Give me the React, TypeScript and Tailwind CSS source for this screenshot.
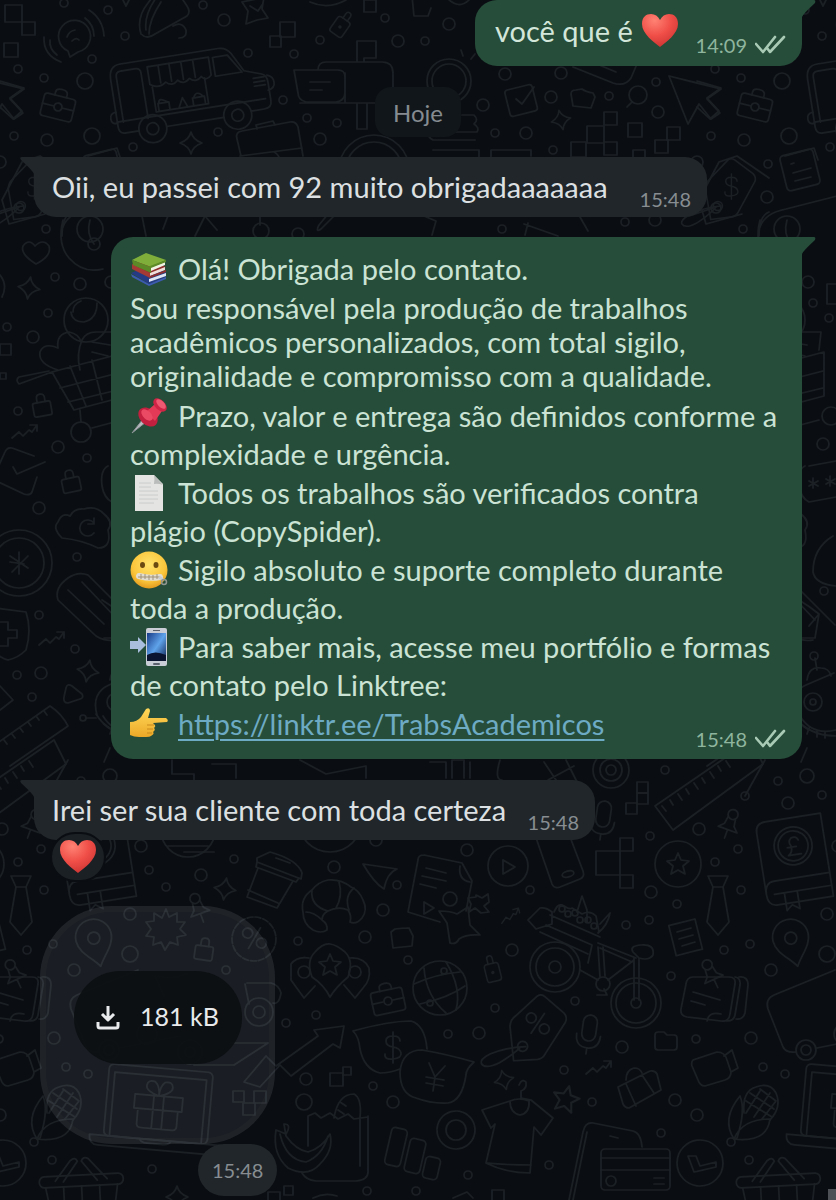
import type { ReactNode } from "react";

type Spot = { x: number; y: number; r?: number; s?: number };

const at = ({ x, y, r = 0, s = 1 }: Spot) =>
  `translate(${x} ${y}) rotate(${r}) scale(${s})`;

// [x, y, radius] of the small rings scattered over the wallpaper
const rings: number[][] = [
  [64, 3, 4], [108, 10, 4], [125, 36, 4], [224, 20, 6], [92, 59, 4], [18, 69, 4], [44, 78, 4], [85, 81, 8],
  [248, 53, 4], [294, 54, 4], [320, 40, 4], [398, 41, 6], [385, 18, 4], [203, 5, 4], [283, 100, 4],
  [307, 118, 4], [337, 123, 4], [320, 139, 6], [218, 132, 4], [133, 147, 4], [92, 136, 8], [47, 140, 6],
  [14, 136, 4], [46, 229, 4], [0, 162, 6], [449, 24, 6], [425, 41, 4], [505, 74, 6], [561, 73, 6],
  [551, 97, 6], [483, 105, 6], [495, 133, 4], [526, 133, 6], [553, 150, 4], [609, 96, 4], [656, 82, 4],
  [658, 112, 6], [71, 164, 4], [70, 197, 6], [625, 222, 4], [655, 220, 6], [502, 229, 4], [55, 277, 4],
  [80, 284, 6], [48, 313, 4], [7, 327, 4], [33, 337, 6], [18, 411, 4], [58, 447, 6], [87, 458, 4],
  [39, 508, 6], [77, 557, 4], [39, 615, 4], [75, 649, 4], [41, 673, 6], [17, 675, 4], [32, 697, 4],
  [111, 282, 6], [116, 303, 4], [132, 318, 4], [126, 444, 6], [127, 591, 4], [665, 770, 4], [48, 796, 4],
  [81, 781, 4], [91, 803, 6], [125, 795, 4], [2, 829, 6], [650, 836, 4], [41, 849, 4], [18, 862, 4],
  [44, 890, 4], [651, 892, 6], [677, 904, 4], [141, 846, 6], [149, 870, 4], [166, 887, 4], [201, 875, 6],
  [234, 859, 4], [130, 914, 6], [53, 944, 4], [27, 950, 4], [74, 970, 6], [130, 954, 8], [226, 970, 4],
  [286, 1023, 4], [298, 941, 4], [54, 1038, 6], [66, 1067, 4], [88, 1074, 4], [52, 1160, 4],
  [152, 1169, 4], [306, 1079, 6], [304, 1102, 8], [334, 867, 6], [376, 840, 6], [467, 850, 6],
  [397, 885, 4], [383, 910, 6], [365, 937, 6], [408, 960, 4], [530, 890, 4], [512, 950, 6],
  [495, 1008, 4], [479, 1033, 6], [448, 1034, 4], [373, 1086, 4], [393, 1102, 6], [316, 1015, 4],
  [564, 1070, 4], [549, 1165, 4], [468, 1175, 4], [416, 1191, 4], [367, 1191, 4], [649, 920, 4],
  [626, 925, 4], [671, 976, 4], [575, 1001, 4], [622, 1047, 6], [696, 1039, 4], [675, 1100, 6],
  [0, 1115, 6], [661, 1133, 4], [592, 1102, 4],
];

// [x, y, size] of the pixel squares
const squares: number[][] = [
  [5, 5, 17], [22, 22, 13], [4, 43, 14], [280, 22, 15], [270, 36, 11], [604, 112, 13], [587, 126, 17],
  [571, 142, 15], [604, 142, 13], [628, 123, 14], [667, 127, 13], [655, 140, 13], [633, 150, 12],
  [637, 782, 11], [637, 793, 11], [626, 803, 11], [596, 851, 24], [620, 838, 13], [620, 875, 13],
  [233, 1091, 11], [243, 1103, 12], [254, 1091, 12], [330, 1073, 13], [343, 1067, 8], [492, 1190, 12],
  [0, 344, 11], [0, 373, 6], [130, 284, 20], [364, 0, 12], [268, 1192, 12], [284, 1186, 9],
];

const Sparkle = (p: Spot) => (
  <path transform={at(p)} d="M0-11Q2-3 11 0Q2 3 0 11Q-2 3-11 0Q-2-3 0-11Z" />
);

const Briefcase = (p: Spot) => (
  <g transform={at(p)}>
    <rect x="-16" y="-11" width="32" height="23" rx="3" />
    <path d="M-6-11v-3q0-4 6-4t6 4v3M-16 0H-5M5 0h11" />
    <circle r="4" />
  </g>
);

const Padlock = (p: Spot) => (
  <g transform={at(p)}>
    <rect x="-9" y="-5" width="18" height="14" rx="2" />
    <path d="M-4-5v-4q0-4 4-4t4 4v4" />
  </g>
);

const Trend = (p: Spot) => (
  <path transform={at(p)} d="M-12 5l7-6 4 4 6-6 3 2 5-7M6-8h7v6" />
);

const MapPin = (p: Spot) => (
  <g transform={at(p)}>
    <path d="M0 24C-6 14-18 6-18-6a18 18 0 0 1 36 0C18 6 6 14 0 24Z" />
    <circle cy="-5" r="6" />
  </g>
);

const Star = (p: Spot) => (
  <path transform={at(p)} d="M0-11l3 7 8 1-6 5 2 8-7-4-7 4 2-8-6-5 8-1Z" />
);

const Microphone = (p: Spot) => (
  <g transform={at(p)}>
    <rect x="-7" y="-17" width="14" height="26" rx="7" />
    <path d="M-12 3q0 13 12 13T12 3M0 16v6" />
  </g>
);

const Bottle = (p: Spot) => (
  <g transform={at(p)}>
    <rect x="-8" y="-6" width="16" height="20" rx="3" />
    <path d="M-3-6v-6q0-3 3-3t3 3v6" />
    <circle cy="4" r="1" />
  </g>
);

const PushPin = (p: Spot) => (
  <g transform={at(p)}>
    <circle cy="-9" r="5" />
    <path d="M-4-5l-1 7-5 5h20l-5-5-1-7M0 7v9" />
  </g>
);

const Tie = (p: Spot) => (
  <path transform={at(p)} d="M-10-28h20l-5 11H-5ZM-5-17l-6 35L0 31l11-13L5-17" />
);

const Folder = (p: Spot) => (
  <path transform={at(p)} d="M-11-6q0-3 3-3h6l3 3h7q3 0 3 3v9q0 3-3 3H-8q-3 0-3-3Z" />
);

const Dollar = (p: Spot) => (
  <path transform={at(p)} d="M7-6q0-5-7-5t-7 5 7 6 8 6-8 6-8-5M0-15v31" />
);

const Percent = (p: Spot) => (
  <g transform={at(p)}>
    <path d="M5-11L-4 11" />
    <circle cx="-7" cy="-4" r="5" />
    <circle cx="8" cy="4" r="5" />
  </g>
);

const PriceTag = ({ children, ...p }: Spot & { children: ReactNode }) => (
  <g transform={at(p)}>
    <path d="M-18-10 2-31q4-3 8 0l20 15q4 4 2 9L14 26q-2 5-7 6l-24 3-6-34q0-7 5-11Z" />
    <circle cx="-9" cy="20" r="5" />
    <path d="M-6 20q-20 2-35 10-10 6-8 10 4 6 18-2 12-8 20-17" />
    {children}
  </g>
);

const Corn = (p: Spot) => (
  <g transform={at(p)}>
    <path d="M-18 22q-13-20 6-43 6 14-3 42ZM-18 22q8-20 36-20-3 24-36 20Z" />
    <path d="M-8-4q-2-22 12-26 14-5 20 6 6 14-6 27M-6-16l26 16M-2-24l24 16M8-28l16 12M-6-4 8-26M2 0 18-24M10 2 24-16" />
    <circle cx="-21" cy="25" r="4" />
  </g>
);

const Basket = (p: Spot) => (
  <g transform={at(p)}>
    <rect x="-42" y="0" width="84" height="11" rx="5" />
    <path d="M-36 11l4 24M36 11l-4 24M-18 11v24M0 11v24M18 11v24M-26 5l16-20q5-4 7 1L-18 6M26 5 8-16q-5-3-7 2L16 6" />
  </g>
);

const Laptop = (p: Spot) => (
  <g transform={at(p)}>
    <rect x="-52" y="-40" width="104" height="72" rx="5" />
    <path d="M-46 32v-64h92v64M-66 32H66q0 10-9 10H-57q-9 0-9-10ZM-16 32q2 4 8 4H8q6 0 8-4" />
    <path d="M-24-12h48v14h-48ZM-20 2v15q0 4 4 4h32q4 0 4-4V2M-5-12v33M5-12v33M0-12q-14-4-13-10t8-4q5 4 5 14 0-10 5-14 7-2 8 4T0-12" />
  </g>
);

const NoteStack = (p: Spot) => (
  <g transform={at(p)}>
    <path d="M-20-20h36q7 0 6 7l-5 30q-1 8-9 7l-34-4q-7-1-6-8l5-25q1-7 7-7ZM-6 24q2-10 14-7" />
    <path d="M22-20q6 1 5 8l-5 30q-1 6-8 6M26-20q9-1 9 8l-3 28q-2 7-9 6M-20-5l27 8M-22 4l14 4" />
  </g>
);

const Truck = (p: Spot) => (
  <g transform={at(p)}>
    <path d="M-54 47h-13q-7 0-7-7v-48q0-14 12-14H37q8 0 12 7l10 19 17 6q5 2 5 9v19q0 7-8 7H60M-26 47h58" />
    <path d="M-68 36v-46q0-5 5-5h14q6 0 6 5v46M-74 35h150M-36-15h62v18q-6 6-10 0-6 6-12 0-6 6-12 0-6 6-12 0-8 6-16 0ZM-34 6v25h53V5M-25-15V3M-14-15V3M-2-15V3M10-15V3M30-14h15l12 19H30ZM-31 31v-8h11v8M-30 23q0-7 9 0M4 31v-8h12v8M5 23q4-8 10 0M-11 31l5-10 4 10M67 13h11M67 17h11M67 21h11M81 12q6 2 6 8t-7 7" />
    <path d="M-74 25q-6 0-6 6t6 5" />
    <circle cx="-40" cy="47" r="14" /><circle cx="-40" cy="47" r="6" />
    <circle cx="46" cy="47" r="14" /><circle cx="46" cy="47" r="6" />
  </g>
);

const Book = (p: Spot) => (
  <g transform={at(p)}>
    <path d="M34-40h-56q-10 0-10 10v62q0 12 10 12h56ZM-32 32q0-12 10-12h56M-24 33h58M-14 33v18l6-5 7 5V33" />
    <circle cx="2" cy="-12" r="19" /><circle cx="2" cy="-12" r="15" />
    <path d="M8-17q-2-5-7-3-4 3-1 8 1 6-4 9H9M-4-11h9" />
  </g>
);

const Doodles = () => (
  <>
    {rings.map(([x, y, r]) => (
      <circle key={`${x}-${y}`} cx={x} cy={y} r={r} />
    ))}
    {squares.map(([x, y, w]) => (
      <rect key={`${x}-${y}`} x={x} y={y} width={w} height={w} />
    ))}

    {/* top */}
    <path d="M70 57l-2-6a16 16 0 1 1 10 1Z" />
    <path d="M67 37q2-6 8-7M72 41q4-4 7-1M85 18q9 7 9 18M89 10q14 9 15 26M50 40q-1 9 7 15M44 37q-1 18 17 25" />
    <path d="M141 34q-5-16 7-31l6-8M141 34q6 6 14 0l32-18q4-4 0-10l-8-12M146 30q-2-15 10-32M149 34q0-14 12-32M173 26q9-5 13 4 1 8-7 8" />
    <path d="M123 0l3 6 3-6M242 2l24-5M242 2l6 9-2 13 11-4 11-2-6-9 2-12M250 6l8 5 4-6" />
    <path d="M310 2q18 8 36-2M412-4l2 20 14 0 3-8M447-2q12 12 22 2" />
    <Truck x={185} y={76} r={-9} />
    <Bottle x={342} y={24} r={35} s={0.9} />
    <Briefcase x={58} y={107} r={14} />
    <path d="M0 81l24 7-14 10 12 13-9 8-13-12" />
    <path d="M294 70h44q7 0 7 7v15q0 9-9 10h-30q-8-2-8-9ZM318 70q0-8 8-8h56q11 0 11 11v30h-93M345 73v30M357 62V41h19v17h-12v4M357 103v26h10v-26M310 82h20M310 90h12" />
    <path d="M237 139q-2-7 5-8l48-9q6-1 8 5l5 29M237 139l4 17M257 129l-1-4 17-4 2 4M240 156l62-8M274 152q4 2 6 7" />
    <Sparkle x={191} y={143} />
    <circle cx="374" cy="170" r="35" /><circle cx="374" cy="170" r="28" />
    <path d="M339 211l-18 18q-6 4-2-4l14-17" />
    <path d="M88 156l29-8 4 12" />
    <path d="M2 200l20-38 18-6 32 22M2 200l7 24 36-10M-8 216l24-8" /><circle cx="19" cy="208" r="5" />
    <circle cx="449" cy="81" r="22" />
    <circle cx="449" cy="81" r="17" />
    <path d="M461 50l2 6M475 54l-4 5" />
    <path d="M462 115h12q5 5 0 9 6 4 3 8h-48q-2 5 4 8h42M433 150h46v8M491 158v-8h40v6" />
    <rect x="507" y="87" width="28" height="27" rx="3" transform="rotate(-14 521 100)" />
    <path d="M516 99l6 5 12-17" />
    <path d="M571 94q0-4 5-4l6-1q4 3 11 4l2 4-4 11-18-2Z" />
    <circle cx="638" cy="95" r="9" /><path d="M632 102l-5 5" />
    <path d="M573 67l40 16q12 4 18-5l6-14M592 62l24 10" />
    <path d="M669 76l52 13-14 10 13 14-9 6-12-15-11 20Z" />
    <Sparkle x={561} y={120} r={-12} s={0.9} />
    <rect x="86" y="152" width="34" height="36" rx="4" transform="rotate(-14 103 170)" />
    <path d="M94 164l3-1M96 173l18-5M98 181l16-4" />
    <PriceTag x={29} y={188} s={0.9}>
      <Dollar x={6} y={-2} s={0.9} />
    </PriceTag>
    <path d="M63 227q5-14 26-18l55-14M158 215q4-10 12-6M163 229l6-16" />
    <circle cx="90" cy="229" r="13" />
    <path d="M62 236q0-20 10-24M142 216l4 20M432 235l4-14-12-5M524 224l34 12M525 235l3-12M580 217l8 14" />
    <path d="M195 236l10-20 12 14M260 215v10" /><circle cx="261" cy="231" r="8" /><circle cx="298" cy="234" r="6" />

    {/* left edge, repeated on the right */}
    <path d="M63 220q-6 24 6 38 14 16 34 11M90 220q-4 14 4 24" /><circle cx="94" cy="244" r="6" />
    <path d="M36 264q-16-10-13-18 6-8 12 0 8-8 14 0 3 10-13 18Z" />
    <Sparkle x={29} y={288} r={8} />
    <path d="M0 275q8 10 2 22" />
    <circle cx="86" cy="320" r="22" />
    <path d="M73 312q0-8 8-11M97 303q0 16-13 19-12 0-13-10" />
    <path d="M58 370q-20-6-18-18 4-10 18-4-2-14 11-16 10 2 12 10M80 370q-4-16 2-30 4-8 14-8h28l-2 18M92 342l18 3M92 352l16 4M52 372l22 38M52 372l-33 12q-4-4 0-7l30-6M52 372l75-20v44l-53 14M60 388l66-17M68 402l58-14M70 366l16 40M92 360l10 40M80 410l1 12M92 428l30-8" />
    <circle cx="81" cy="432" r="10" /><circle cx="134" cy="416" r="9" />
    <Padlock x={42} y={407} r={-10} />
    <Trend x={24} y={433} />
    <path d="M34 456l-22-8q-5-1-7 4L-6 476M-6 480l30 14q6 2 8-2l5-15M13 467l4 7 28-12" />
    <Padlock x={71} y={483} r={-12} />
    <path d="M108 466q-8 4-6 20 2 12 10 16l27-5M112 466l27-5M116 478v10M112 481l9 5M121 481l-9 5M133 476v10M129 479l9 5M138 479l-9 5" />
    <path d="M62 538q-10-10-4-16 4-10 12-6 4-8 14-7 12-4 20 5 10 8 4 16 4 18-10 18-16-8-36-10Z" />
    <path d="M94 523a8 8 0 1 0 0 10M94 518v6h-6" />
    <circle cx="19" cy="563" r="33" /><circle cx="19" cy="563" r="25" />
    <path d="M19 552v22M10 556l18 12M12 572l16-16M10 562l14 2" />
    <path d="M58 600q-4-12 10-22 10-7 20-3l50 50M58 600l38 36q10 6 20 4M68 590l36 34M82 582l36 38M136 536q-20 12-20 36 2 12 23 14" />
    <path d="M-4 608l30 4q6 18 0 38-8 8-18 10-8-2-16-10M0 622h8v8h9v8H8v8H0" />
    <path d="M102 600q10 6 20 14l-4 24h-14M112 626l10-12" />
    <Trend x={51} y={640} />
    <Sparkle x={88} y={671} r={10} />
    <path d="M66 688q1-5 6-2l10 8q2 4-2 5l-12 4q-5 0-4-6ZM0 686l13 14-13 10M-4 744l54-38q12 8 18 20l-58 40M4 740l3 4M12 734l3 4M20 728l3 4M28 722l3 4M36 716l3 4M44 711l3 4" />
    <path d="M97 715q-6-22 12-30l28-12M86 718h10M96 714q6 10 16 16" />
    <circle cx="83" cy="718" r="3" /><circle cx="116" cy="702" r="9" /><circle cx="116" cy="702" r="3" />
    <path d="M103 716q12 20 36 14M104 724q14 12 36 12M112 728l-2 6M120 731v6M128 732v6M118 658l2 12M110 680q2-14 14-12 8 0 10 8M104 762l6-14" />
    <circle cx="117" cy="656" r="4" /><circle cx="110" cy="776" r="7" />

    {/* band between the big message and the last one */}
    <path d="M68 760l-20 36M172 760v14h22v6M212 764h24v14M300 760l26 14 40-8v12M430 762h16v16M452 778v-18h12v18M470 778v-16M500 760q-6 20 2 20M544 762l16 24M566 760l14 28M548 780l26-14" />
    <circle cx="611" cy="770" r="18" /><circle cx="611" cy="770" r="11" /><circle cx="611" cy="770" r="5" />
    <path d="M655 806l96-66 12 24-90 66ZM662 806l4 5M670 800l3 5M678 794l4 6M686 789l3 5M694 783l4 6M702 778l3 5M710 772l4 6M718 766l3 5M726 761l4 6" />
    <Microphone x={603} y={818} r={8} />
    <PushPin x={33} y={823} r={20} />
    <Book x={96} y={858} r={-9} />
    <circle cx="678" cy="864" r="23" /><Star x={678} y={864} />
    <Tie x={21} y={904} />
    <circle cx="508" cy="866" r="20" /><path d="M503 860v14l12-7Z" />
    <path d="M534 832l18 52q2 5 8 3l20-8q5-2 3-8l-16-42" />
    <ellipse cx="568" cy="874" rx="6" ry="3" transform="rotate(-15 568 874)" />
    <circle cx="188" cy="830" r="27" /><circle cx="330" cy="820" r="32" />
    <path d="M168 846h40M184 852h30" />

    {/* lower half */}
    <path d="M257 858l13-6q28 8 32 21l-1 6-44-17ZM257 862l-1 5 40 15 3-4M258 868l-11 29 30 11 16-27M248 890l30 13M276 858l14 5" />
    <path d="M313 930q8 4 14 0 1-6-5-10 0-6 6-9 10-5 20-1 4 6 2 12 6 3 12-4 6-8 1-18-4-10-12-13-10-8-23-7-10 2-16 10-12 8-9 22 0 12 10 18ZM312 890q-2 16 16 21M339 882q4 14-3 26M354 888q-10 8-5 22M306 912q8 0 16 8" />
    <path d="M363 864l34 5q-10 4-13 20-10-6-21-25Z" />
    <Sparkle x={225} y={889} r={8} />
    <path d="M424 855l38 8 10 18-6 30M424 855q-6 0-6 5l-10 52 32 10M426 868l20 5M422 876l24 5M420 884l16 4M460 866q-2 14 10 16M424 902v12l10-6Z" />
    <circle cx="450" cy="899" r="7" />
    <path d="M468 907l2 18 10 10q-14-1-21 4-3 6-9 4l-3-20-8-12q12 0 18 3Z" />
    <path d="M476 895l6 3 6-4 1 8-5 4 5 6-8 1-6-5-6 4 2-8-3-6 8-1Z" />
    <Trend x={510} y={917} r={-15} s={0.8} />
    <path d="M391 932l4-3q8-1 14-1l4 8-1 10-19 2Z" />
    <path d="M330 997q-6-12-18-20-6-16 3-25 8-9 15-8t15 8q9 9 3 25-12 10-18 20ZM309 958q-12-2-18 6v16l13 18 11-12M350 958q14-1 19 10 2 12-6 20l-8 10-11-13" />
    <Star x={330} y={965} /><circle cx="304" cy="972" r="6" /><circle cx="355" cy="972" r="6" />
    <circle cx="440" cy="988" r="27" />
    <path d="M414 984q22-10 46-12M420 1004q28-6 45-18M424 968q2 28 22 45M446 962q16 26 10 48" />
    <circle cx="444" cy="971" r="3" /><circle cx="430" cy="1003" r="3" />
    <Bottle x={492} y={969} r={-14} s={0.9} />
    <Briefcase x={388} y={1001} r={-12} />
    <path d="M528 920l12-12q6-1 12 4v12l-16 5ZM550 915l50 22M546 925l46 20-4 18M540 932l48 22M554 912q4-10 10-6t8 2l10 6q8-4 14 2l3 16M577 912l5-16 5 14v12M600 924l10-11q-2 12-12 20" />
    <circle cx="562" cy="909" r="3" /><circle cx="568" cy="914" r="3" /><circle cx="575" cy="913" r="3" />
    <circle cx="580" cy="920" r="3" /><circle cx="588" cy="920" r="3" /><circle cx="594" cy="926" r="3" />
    <circle cx="555" cy="967" r="25" /><circle cx="555" cy="967" r="19" /><circle cx="555" cy="967" r="6" />
    <circle cx="636" cy="1003" r="25" /><circle cx="636" cy="1003" r="20" /><circle cx="636" cy="1003" r="5" />
    <path d="M598 943l38 15M600 948l32 14M634 1000v-42M639 1000v-42M634 960l-26 20M598 947l2 30M603 947l2 29M580 970l18 10M633 952q-4-6 8-7 14-1 12 10-4 6-14 3l-6-6ZM597 995h10l-3-6" />
    <circle cx="603" cy="984" r="7" />
    <Microphone x={589} y={1032} r={8} />
    <rect x="672" y="922" width="27" height="31" transform="rotate(-14 685 937)" />
    <path d="M677 932l14-4M679 939l14-4M682 946l13-4" />
    <NoteStack x={16} y={997} />
    <PushPin x={14} y={973} r={-25} />
    <MapPin x={95} y={943} r={-14} />
    <path d="M166 909l3 8 8-4v9h8l-5 7 6 6-9 2 1 8-8-3-5 8-4-8-8 3 1-8-8-1 5-7-5-7 8-1v-8l8 5Z" />
    <Padlock x={204} y={951} r={8} />
    <PushPin x={198} y={907} r={-20} />
    <circle cx="254" cy="939" r="22" strokeDasharray="6 2" />
    <Percent x={254} y={938} r={8} />
    <path d="M247 983h24q8 2 10 10-2 12-8 10M245 984l4 20" /><circle cx="259" cy="1012" r="14" /><circle cx="259" cy="1012" r="6" />
    <path d="M138 970l-61 25q-9 4-6 14l15 38q3 6 13 5M155 976l9 20M158 976q14 4 28-2M120 1048l60-12" />
    <circle cx="109" cy="1050" r="10" /><circle cx="109" cy="1050" r="5" />
    <circle cx="190" cy="1052" r="12" /><circle cx="190" cy="1052" r="5" /><circle cx="147" cy="1034" r="10" />
    <path d="M230 1043h38l-34 22h-40M268 1043l-34 22" />
    <PriceTag x={533} y={1027} r={4}>
      <Percent x={4} y={-4} r={8} />
    </PriceTag>
    <path d="M353 1031q36-10 58-10 14 4 16 28M353 1031q6 6 7 18 4 20 20 24 10 0 20-4" />
    <path d="M474 1062q-28-8-52-12-20 0-22 22 0 22 16 26 16 6 32 5 14-2 18-28 0-6 8-13Z" />
    <Dollar x={393} y={1047} />
    <path d="M429 1063l6 14 10-11M435 1077l-2 14M426 1077l18 3M426 1083l17 3" />
    <path d="M244 1082l22-26 10 10 42-30-4-6 30-4-4 22-7-4-42 32-11-11-20 22Z" />
    <Sparkle x={504} y={1080} r={-14} s={0.9} />
    <Star x={566} y={1099} r={14} s={1.2} />
    <Folder x={666} y={1041} />
    <path d="M-4 1060l24-8q8 0 10 8l4 12q0 6-6 8l-20 6q-5 0-7-6l-6-14q-1-4 1-6ZM27 1056l8-6 6 18-7 4" />
    <Trend x={598} y={1069} />
    <path d="M618 1087l32-16q5-1 7 3l4 16-32 18q-4 0-6-4ZM626 1084l10 22M642 1075l12 18M626 1080q0-10 8-12 6 0 8 5" />
    <Corn x={55} y={1117} />
    <Laptop x={158} y={1108} r={5} />
    <path d="M308 1116l7-3 6 5 9-5 8 6 10-5 6 5 14-2M308 1116v30M368 1116v56q0 8-12 9h-40q-10-1-14-8M360 1116v50M334 1118q4-24 20-24 8 4 6 24M340 1102l6 4M338 1110l6 4" />
    <path d="M276 1130q-4 24 12 38 20 10 32-4 14-14 10-30-8 14-22 18-12-2-22-16l-2-12q8 0 2 10ZM280 1134q6 26 26 28 16-6 22-26" />
    <rect x="388" y="1128" width="16" height="38" rx="4" transform="rotate(13 396 1147)" />
    <rect x="407" y="1139" width="16" height="34" rx="4" transform="rotate(13 415 1156)" />
    <rect x="424" y="1157" width="15" height="22" rx="4" transform="rotate(13 431 1168)" />
    <circle cx="456" cy="1130" r="19" strokeDasharray="5 1" /><circle cx="456" cy="1130" r="10" />
    <path d="M510 1101l-28 9 9 18 4-4-9 39q20 10 44 10l4-46 7 8 12-17-22-18-10-2M510 1101q0 12 10 14 10-2 9-14-10-4-19 0M521 1099v-8q6-2 5-9-4-4-7 3M487 1163q20 2 44 2" />
    <path d="M569 1200l14-68q2-10 10-9l40 8q8 2 9 16M573 1200l14-68M610 1136l8 2" />
    <rect x="601" y="1149" width="69" height="41" rx="4" />
    <path d="M601 1158h69M601 1170h69M654 1178h10M654 1184h10" /><circle cx="611" cy="1181" r="5" />
    <circle cx="3" cy="1163" r="23" />
    <path d="M-9 1156l6 16 22-5v-5l-16 4-4-10Z" />
    <Basket x={81} y={1175} r={-3} />
    <Sparkle x={177} y={1197} />
    <path d="M313 1198q12-6 24-2M453 1198l14-6 6 6" />
  </>
);

const Wallpaper = () => (
  <svg className="absolute inset-0 h-full w-full" aria-hidden="true">
    <defs>
      <g id="doodles" fill="none" stroke="#1b2025" strokeWidth="1.7" strokeLinejoin="round" strokeLinecap="round">
        <Doodles />
      </g>
      <pattern id="tile" width="697" height="1240" patternUnits="userSpaceOnUse">
        <use href="#doodles" />
        <use href="#doodles" x="-697" />
        <use href="#doodles" x="697" />
      </pattern>
    </defs>
    <rect width="100%" height="100%" fill="url(#tile)" />
  </svg>
);

/* Emoji */
const Emoji = ({ label, children }: { label: string; children: ReactNode }) => (
  <svg viewBox="0 0 38 38" role="img" aria-label={label} className="inline-block size-[38px] shrink-0">
    {children}
  </svg>
);

const Heart = () => (
  <Emoji label="heart">
    <defs>
      <radialGradient id="heart" cx=".35" cy=".2" r=".9">
        <stop offset="0" stopColor="#ff8273" />
        <stop offset=".5" stopColor="#f04f48" />
        <stop offset="1" stopColor="#c9302f" />
      </radialGradient>
    </defs>
    <path fill="url(#heart)" d="M19 35C13 30 1 22 1 12 1 5 5 2 10 2c4 0 7 2 9 6 2-4 5-6 9-6 5 0 9 3 9 10 0 10-12 18-18 23Z" />
  </Emoji>
);

const Books = () => (
  <Emoji label="books">
    <path fill="#253b83" d="M1 23l18 11 17-7v-5L18 16Z" />
    <path fill="#dfe6f3" d="M19 29l17-6v3l-17 6Z" />
    <path fill="#3c5ab0" d="M1 24l18 10v2L2 27ZM19 34l17-7v2l-17 7Z" />
    <path fill="#8f2e2c" d="M2 14l18 10 16-7-18-8Z" />
    <path fill="#a53a35" d="M2 14l18 9v5L2 19Z" />
    <path fill="#f0dcd8" d="M20 23l15-6v3l-15 6Z" />
    <path fill="#8f2e2c" d="M20 26l16-6v2l-16 6Z" />
    <path fill="#7fae3a" d="M2 10 16 3l20 7-15 7Z" />
    <path fill="#5c8a26" d="M2 10l19 7v6L3 15Z" />
    <path fill="#f1f3e4" d="M21 17l14-5v3l-14 6Z" />
    <path fill="#5c8a26" d="m20 16 16-6v2l-15 6Z" />
  </Emoji>
);

const Pushpin = () => (
  <Emoji label="pushpin">
    <path d="M2 36 13 22l3 3Z" fill="#b8bcc0" stroke="#8e9498" />
    <ellipse cx="18" cy="20" rx="8" ry="11" transform="rotate(-46 18 20)" fill="#c3203f" />
    <path d="m16 15 9-8 7 7-7 10Z" fill="#e23a57" />
    <ellipse cx="17" cy="18" rx="4" ry="7" transform="rotate(-46 17 18)" fill="#ea4a64" />
    <ellipse cx="30" cy="8" rx="5" ry="8" transform="rotate(-46 30 8)" fill="#cf2445" />
    <ellipse cx="31" cy="7" rx="3" ry="6" transform="rotate(-46 31 7)" fill="#ee5a72" />
  </Emoji>
);

const Page = () => (
  <Emoji label="page">
    <path d="M5 1h19l9 9v27H5Z" fill="#e4e5e3" />
    <path d="m24 1 9 10q-5-2-9-1 1-5 0-9Z" fill="#b9bcba" />
    <path d="M9 9h12M9 13h12M9 17h19M9 21h19M9 25h19M9 29h15" stroke="#c9ccca" />
  </Emoji>
);

const ZipperFace = () => (
  <Emoji label="zipper-mouth face">
    <defs>
      <radialGradient id="face" cx=".5" cy=".35" r=".65">
        <stop offset="0" stopColor="#ffe36b" />
        <stop offset=".7" stopColor="#fbc53a" />
        <stop offset="1" stopColor="#e39a1e" />
      </radialGradient>
    </defs>
    <circle cx="19" cy="19" r="18.5" fill="url(#face)" />
    <ellipse cx="12.5" cy="14" rx="2.5" ry="3" fill="#6b4a12" />
    <ellipse cx="26" cy="14" rx="2.5" ry="3" fill="#6b4a12" />
    <path d="M9 25q11 3 21 1" stroke="#e2ddd2" strokeWidth="6" strokeLinecap="round" fill="none" />
    <path d="M8 26h22" stroke="#a5936f" fill="none" />
    <path d="M11 23v5M15 23v5M19 24v5M23 24v5M27 23v5" stroke="#9c917c" />
    <path d="m29 26 4 3" stroke="#c9ccd0" strokeWidth="3" />
    <circle cx="34" cy="31" r="2.5" fill="none" stroke="#8f9690" strokeWidth="1.5" />
  </Emoji>
);

const PhoneArrow = () => (
  <Emoji label="phone with arrow">
    <defs>
      <linearGradient id="screen" x1="0" y1="0" x2="1" y2="1">
        <stop offset="0" stopColor="#173a86" />
        <stop offset=".5" stopColor="#5fa3ea" />
        <stop offset="1" stopColor="#0d2050" />
      </linearGradient>
    </defs>
    <rect x="16" y="0" width="21" height="38" rx="2" fill="#c9ced6" />
    <rect x="17" y="5" width="19" height="28" fill="url(#screen)" />
    <path d="M17 27q8-5 19 0v6H17Z" fill="#0b1530" />
    <rect x="23" y="35" width="7" height="2" rx="1" fill="#5b626d" />
    <path d="M23 2.5h7" stroke="#5b626d" />
    <path d="M0 13h8V9l8 8-8 8v-4H0Z" fill="#a9bddd" />
  </Emoji>
);

const Pointing = () => (
  <Emoji label="pointing right">
    <defs>
      <linearGradient id="hand" x1="0" y1="0" x2="0" y2="1">
        <stop offset="0" stopColor="#ffd95a" />
        <stop offset="1" stopColor="#eda827" />
      </linearGradient>
    </defs>
    <path
      fill="url(#hand)"
      d="M0 17q7 0 11-5l5-8q4-2 4 2l-2 7h18q3 2 1 4l-14 1q4 3 1 5 2 2-1 4 2 2-2 4-1 1-5 1H9q-5 0-9-2Z"
    />
    <path d="M17 20h7M17 24h6M17 28h5" stroke="#c98a1c" />
  </Emoji>
);

const Ticks = () => (
  <svg viewBox="0 0 31 20" className="h-5 w-[31px]" fill="none" stroke="#a9cbb6" strokeWidth="2.6" strokeLinecap="round" strokeLinejoin="round" aria-label="delivered" role="img">
    <path d="M1 9l7 8L20 2M12 13l3 4L29 2" />
  </svg>
);

/* Bubbles */
const Time = ({ children, sent }: { children: string; sent?: boolean }) => (
  <span className="flex items-center gap-2">
    <time className={`text-xl leading-6 ${sent ? "text-[#8fb59f]" : "text-[#878d91]"}`}>{children}</time>
    {sent && <Ticks />}
  </span>
);

const Received = ({ text, className }: { text: string; className: string }) => (
  <div className={`relative flex h-[60px] max-w-full items-center justify-between rounded-[22px] rounded-tl-none bg-[#20262a] pr-4 pl-[18px] ${className}`}>
    <svg viewBox="0 0 16 17" className="absolute top-0 -left-[14px] h-[17px] w-4" fill="#20262a">
      <path d="M2 0h14v17h-2Q13 14 1 3-1 0 2 0Z" />
    </svg>
    <p className="text-[29px] leading-8 text-[#dde0e2]">{text}</p>
    <span className="pt-6">
      <Time>15:48</Time>
    </span>
  </div>
);

const SentTail = () => (
  <svg viewBox="0 0 16 17" className="absolute top-0 -right-[14px] h-[17px] w-4" fill="#264d39">
    <path d="M14 0H0v17h2Q3 14 15 3q1-3-1-3Z" />
  </svg>
);

const Line = ({ emoji, children }: { emoji: ReactNode; children: ReactNode }) => (
  <span className="flex h-[39px] items-center gap-[10px]">
    {emoji}
    <span>{children}</span>
  </span>
);

export default function App() {
  return (
    <div className="relative min-h-screen overflow-hidden bg-[#0a0d12] font-['Lato','Noto_Sans',sans-serif]">
      <Wallpaper />

      <main className="relative flex flex-col items-start px-[34px]">
        <div className="relative flex h-[66px] w-[327px] items-center justify-between self-end rounded-[22px] rounded-tr-none bg-[#264d39] pr-4 pl-5 pb-1">
          <SentTail />
          <p className="flex items-center gap-2 text-[29px] leading-8 text-[#d3e6da]">
            você que é <Heart />
          </p>
          <span className="pt-7">
            <Time sent>14:09</Time>
          </span>
        </div>

        <div className="mt-[21px] self-center rounded-2xl bg-[#11161a] px-[18px] pt-[14px] pb-3 text-[24px] leading-6 text-[#858b90]">
          Hoje
        </div>

        <Received className="mt-5 w-[673px]" text="Oii, eu passei com 92 muito obrigadaaaaaaa" />

        <div className="relative mt-5 ml-[77px] self-stretch rounded-[22px] rounded-tr-none bg-[#264d39] pt-3 pr-4 pb-4 pl-[19px]">
          <SentTail />
          <div className="text-[29px] leading-[38px] text-[#cbe3d4]">
            <Line emoji={<Books />}>Olá! Obrigada pelo contato.</Line>
            <p className="py-[3px] leading-[34px]">
              Sou responsável pela produção de trabalhos
              <br />
              acadêmicos personalizados, com total sigilo,
              <br />
              originalidade e compromisso com a qualidade.
            </p>
            <Line emoji={<Pushpin />}>Prazo, valor e entrega são definidos conforme a</Line>
            <p>complexidade e urgência.</p>
            <Line emoji={<Page />}>Todos os trabalhos são verificados contra</Line>
            <p>plágio (CopySpider).</p>
            <Line emoji={<ZipperFace />}>Sigilo absoluto e suporte completo durante</Line>
            <p>toda a produção.</p>
            <Line emoji={<PhoneArrow />}>Para saber mais, acesse meu portfólio e formas</Line>
            <p>de contato pelo Linktree:</p>
            <Line emoji={<Pointing />}>
              <a href="https://linktr.ee/TrabsAcademicos" className="text-[#6daac4] underline decoration-2 underline-offset-4">
                https://linktr.ee/TrabsAcademicos
              </a>
            </Line>
          </div>
          <div className="absolute right-4 bottom-2">
            <Time sent>15:48</Time>
          </div>
        </div>

        <Received className="mt-[21px] w-[561px]" text="Irei ser sua cliente com toda certeza" />

        <button
          type="button"
          aria-label="heart reaction"
          className="relative -mt-2 ml-4 flex h-[50px] w-[56px] items-center justify-center rounded-full border-2 border-[#0a0d12] bg-[#1b2025] p-2"
        >
          <Heart />
        </button>

        <div className="mt-6 ml-[6px] flex h-[238px] w-[235px] items-center justify-center rounded-[72px] border-[6px] border-[#b0bac6]/3 bg-[#b0bac6]/10">
          <button
            type="button"
            className="-mt-4 flex h-[93px] w-[168px] items-center justify-center gap-5 rounded-[46px] bg-[#0b0e11]/90 text-[25px] text-[#e8eaec]"
          >
            <svg viewBox="0 0 24 25" className="h-[25px] w-6" fill="none" stroke="currentColor" strokeWidth="3" strokeLinejoin="round">
              <path d="M12 1v14M6 9l6 6 6-6M2 17v4q0 2 2 2h16q2 0 2-2v-4" />
            </svg>
            181 kB
          </button>
        </div>

        <div className="ml-[164px] rounded-full bg-[#20262a] p-[14px]">
          <Time>15:48</Time>
        </div>
      </main>

      <span className="absolute right-0 bottom-0 h-[11px] w-2 bg-[#4d5054]" />
    </div>
  );
}
